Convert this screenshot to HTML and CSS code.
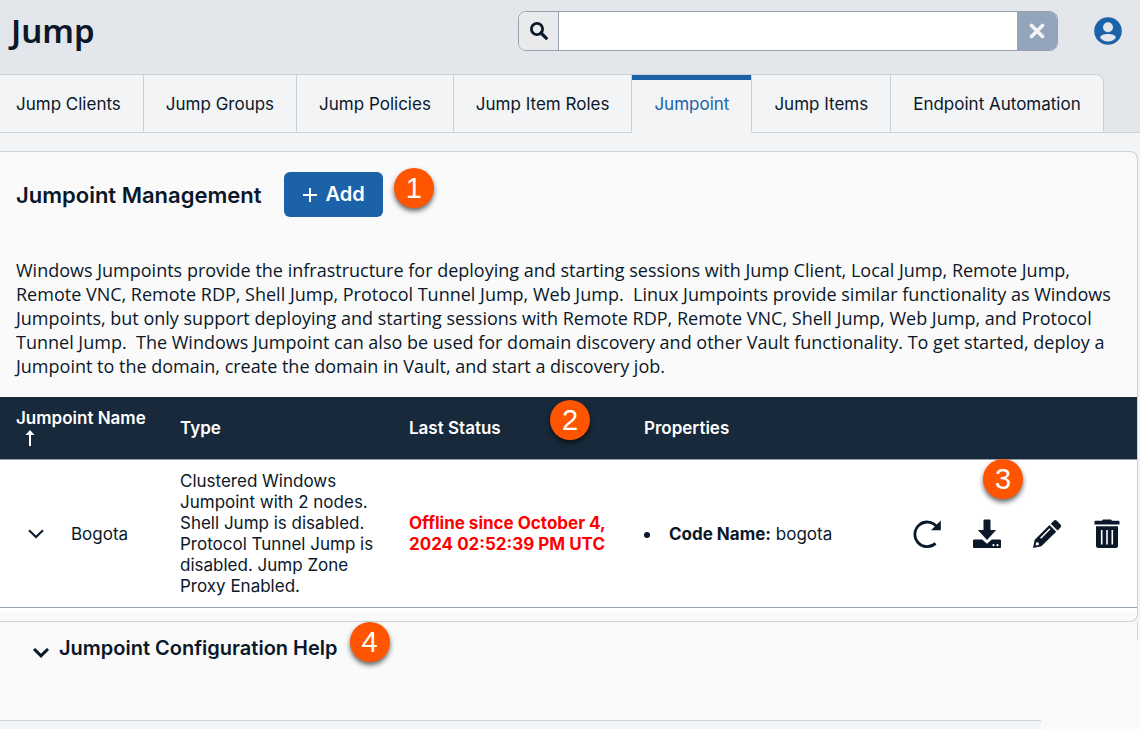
FILE: index.html
```html
<!DOCTYPE html>
<html lang="en">
<head>
  <meta charset="UTF-8" />
  <meta name="viewport" content="width=device-width, initial-scale=1.0" />
  <title>Jump</title>
  <link rel="stylesheet" href="styles.css">
</head>
<body>
  <header class="page-header">
    <h1>Jump</h1>
    <form class="search" role="search">
      <label class="search-label" for="search" aria-label="Search">
        <svg width="18" height="18" viewBox="0 0 18 18" aria-hidden="true">
          <circle cx="7" cy="7" r="5.6" fill="none" stroke="currentColor" stroke-width="2.8"/>
          <path d="M11 11l5.2 5.2" stroke="currentColor" stroke-width="3.2" stroke-linecap="round"/>
        </svg>
      </label>
      <input type="text" id="search">
      <button type="reset" class="search-clear" aria-label="Clear search">
        <svg width="16" height="16" viewBox="0 0 16 16" aria-hidden="true">
          <path d="M2.5 2.5l11 11M13.5 2.5l-11 11" stroke="currentColor" stroke-width="3.6" stroke-linecap="round"/>
        </svg>
      </button>
    </form>
    <button type="button" class="account" aria-label="Account">
      <svg width="28" height="28" viewBox="0 0 28 28" aria-hidden="true">
        <circle cx="14" cy="14" r="13.8" fill="#1c62a8"/>
        <circle cx="14" cy="10.3" r="5" fill="#e3e6eb"/>
        <path d="M6 20.6c1-2.8 4-3.6 8-3.6s7 .8 8 3.6c-1.900 2.500-4.800 4-8 4s-6.100-1.500-8-4z" fill="#e3e6eb"/>
      </svg>
    </button>
  </header>

  <nav class="tabs">
    <a href="#">Jump Clients</a>
    <a href="#">Jump Groups</a>
    <a href="#">Jump Policies</a>
    <a href="#">Jump Item Roles</a>
    <a href="#" class="active">Jumpoint</a>
    <a href="#">Jump Items</a>
    <a href="#">Endpoint Automation</a>
  </nav>

  <main>
    <section class="panel">
      <div class="panel-title">
        <h2>Jumpoint Management</h2>
        <button type="button" class="add">
          <svg width="16" height="16" viewBox="0 0 16 16" aria-hidden="true">
            <path d="M8 1v14M1 8h14" stroke="currentColor" stroke-width="2"/>
          </svg>
          Add
        </button>
        <span class="callout callout-add">1</span>
      </div>

      <p class="intro">Windows Jumpoints provide the infrastructure for deploying and starting sessions with Jump Client, Local Jump, Remote Jump, Remote VNC, Remote RDP, Shell Jump, Protocol Tunnel Jump, Web Jump.&nbsp; Linux Jumpoints provide similar functionality as Windows Jumpoints, but only support deploying and starting sessions with Remote RDP, Remote VNC, Shell Jump, Web Jump, and Protocol Tunnel Jump.&nbsp; The Windows Jumpoint can also be used for domain discovery and other Vault functionality. To get started, deploy a Jumpoint to the domain, create the domain in Vault, and start a discovery job.</p>

      <div class="table-wrapper">
        <table>
          <thead>
            <tr>
              <th class="col-name">Jumpoint Name
                <svg class="sort" width="10" height="16" viewBox="0 0 10 16" aria-hidden="true">
                  <path d="M5 16V3" stroke="currentColor" stroke-width="2"/>
                  <path d="M5 0l4.500 5h-9z" fill="currentColor"/>
                </svg>
              </th>
              <th class="col-type">Type</th>
              <th class="col-status">Last Status <span class="callout callout-table">2</span></th>
              <th>Properties</th>
              <th class="col-actions" aria-label="Actions"></th>
            </tr>
          </thead>
          <tbody>
            <tr>
              <td>
                <div class="name">
                  <button type="button" class="icon-button" aria-label="Expand Bogota">
                    <svg width="16" height="10" viewBox="0 0 16 10" aria-hidden="true">
                      <path d="M1 1.200l7 6.800 7-6.800" fill="none" stroke="currentColor" stroke-width="2"/>
                    </svg>
                  </button>
                  Bogota
                </div>
              </td>
              <td>Clustered Windows Jumpoint with 2 nodes. Shell Jump is disabled. Protocol Tunnel Jump is disabled. Jump Zone Proxy Enabled.</td>
              <td class="offline">Offline since October 4, 2024 02:52:39 PM UTC</td>
              <td>
                <ul>
                  <li><b>Code Name:</b> bogota</li>
                </ul>
              </td>
              <td class="col-actions">
                <div class="actions">
                  <button type="button" class="icon-button" aria-label="Refresh">
                    <svg width="30" height="30" viewBox="0 0 30 30" aria-hidden="true">
                      <path d="M23.500 24.400A12.300 12.300 0 1 1 24.700 7.500" fill="none" stroke="currentColor" stroke-width="2.800"/>
                      <path d="M28.800 1.500V11.200H19z" fill="currentColor"/>
                    </svg>
                  </button>
                  <button type="button" class="icon-button" aria-label="Download">
                    <svg width="30" height="30" viewBox="0 0 30 30" aria-hidden="true">
                      <path d="M11.500 1.500q0-1 1-1h5q1 0 1 1v9.500h5.600L15 21 5.900 11h5.600z" fill="currentColor"/>
                      <path d="M2 20.500h8.200L15 24.800l4.800-4.300H28q1 0 1 1V28q0 1-1 1H2q-1 0-1-1v-6.500q0-1 1-1z" fill="currentColor"/>
                      <circle cx="21.500" cy="26.200" r="1.100" fill="#fff"/>
                      <circle cx="25.500" cy="26.200" r="1.100" fill="#fff"/>
                    </svg>
                  </button>
                  <button type="button" class="icon-button" aria-label="Edit">
                    <svg width="30" height="30" viewBox="0 0 30 30" aria-hidden="true">
                      <path d="M21.800 1.700q1.500-1.500 3 0l3.700 3.700q1.500 1.500 0 3l-3 3-6.700-6.700zM17.500 6l6.700 6.700L9.300 27.300 1 29l1.700-8.300z" fill="currentColor"/>
                      <path d="M8.600 19.200L18 9.800" stroke="#fff" stroke-width="1.500"/>
                      <path d="M4.200 23.200l2.400.3.300 2.400-3.200.7z" fill="#fff"/>
                    </svg>
                  </button>
                  <button type="button" class="icon-button" aria-label="Delete">
                    <svg width="30" height="30" viewBox="0 0 30 30" aria-hidden="true">
                      <path d="M10 1.800l1-1.300h8l1 1.300h6.500q1 0 1 1V5.500h-25V2.800q0-1 1-1z" fill="currentColor"/>
                      <path d="M4 7.300h22V26.500q0 2.500-2.500 2.500h-17Q4 29 4 26.500z" fill="currentColor"/>
                      <path d="M9.700 11v14.500M15 11v14.500M20.300 11v14.500" stroke="#fff" stroke-width="1.600"/>
                    </svg>
                  </button>
                  <span class="callout callout-actions">3</span>
                </div>
              </td>
            </tr>
          </tbody>
        </table>
      </div>
    </section>

    <section class="help">
      <h2>
        <button type="button" class="help-toggle">
          <svg width="16" height="10" viewBox="0 0 16 10" aria-hidden="true">
            <path d="M1 1l7 6.800L15 1" fill="none" stroke="currentColor" stroke-width="3"/>
          </svg>
          Jumpoint Configuration Help
        </button>
      </h2>
      <span class="callout">4</span>
    </section>
    <div class="footer">
      <div class="footer-rule"></div>
    </div>
  </main>
</body>
</html>
```

FILE: styles.css
```css
:root {
  --bg: #f3f4f6;
  --header: #e3e6eb;
  --panel: #fafafa;
  --text: #0a1829;
  --border: #cdd0d5;
  --accent: #1c62a8;
  --table-head: #17293a;
  --line: #97a2b0;
}

* {
  box-sizing: border-box;
}

body {
  margin: 0;
  font-family: Inter, "Liberation Sans", sans-serif;
  font-size: 17px;
  line-height: 21px;
  color: var(--text);
  background: var(--bg);
}

h1, h2, p, ul {
  margin: 0;
}

button, input {
  font: inherit;
  color: inherit;
}

button {
  border: 0;
  padding: 0;
  background: none;
  cursor: pointer;
}

svg {
  display: block;
}

.page-header {
  display: flex;
  align-items: center;
  height: 74px;
  padding: 0 18px 12px 11px;
  background: var(--header);
}

h1 {
  flex: 1;
  font-family: "Noto Sans", sans-serif;
  font-size: 33px;
  font-weight: 600;
  line-height: 46px;
}

.search {
  display: flex;
  width: 540px;
  height: 40px;
  margin-right: 36px;
  border: 1px solid var(--line);
  border-radius: 8px;
  background: #fff;
  overflow: hidden;
}

.search-label {
  display: flex;
  align-items: center;
  justify-content: center;
  width: 40px;
  background: #e9eaeb;
  border-right: 1px solid var(--line);
}

.search input {
  flex: 1;
  min-width: 0;
  border: 0;
  padding: 0 10px;
  outline: none;
}

.search-clear {
  display: flex;
  align-items: center;
  justify-content: center;
  width: 40px;
  color: #f3f4f6;
  background: #93a4bb;
}

.tabs {
  display: flex;
  background: var(--header);
  box-shadow: inset 0 -1px var(--border);
}

.tabs a {
  padding: 19px 22px 17px;
  border: solid var(--border);
  border-width: 1px 1px 1px 0;
  background: var(--bg);
  color: var(--text);
  text-decoration: none;
  white-space: nowrap;
}

.tabs a:first-child {
  padding-left: 16px;
}

.tabs a:last-child {
  border-top-right-radius: 8px;
}

.tabs .active {
  color: var(--accent);
  border-bottom-color: var(--bg);
  box-shadow: inset 0 5px var(--accent);
}

main {
  padding-top: 18px;
}

.panel {
  margin-right: 2px;
  padding-bottom: 9px;
  border: solid var(--border);
  border-width: 1px 1px 1px 0;
  border-radius: 0 8px 8px 0;
  background: var(--panel);
}

.panel-title {
  display: flex;
  align-items: center;
  gap: 22px;
  padding: 20px 16px 41px;
}

h2 {
  font-size: 22px;
  font-weight: 600;
  line-height: 28px;
}

.add {
  display: flex;
  align-items: center;
  gap: 8px;
  height: 45px;
  padding: 0 18px;
  border-radius: 6px;
  background: var(--accent);
  color: #fff;
  font-size: 20px;
  font-weight: 600;
}

.callout {
  width: 40px;
  height: 40px;
  border-radius: 50%;
  background: #ff5500;
  box-shadow: 0 3px 5px rgba(0, 0, 0, 0.6);
  color: #fff;
  font-family: "Liberation Sans", sans-serif;
  font-size: 29px;
  font-weight: 400;
  line-height: 40px;
  text-align: center;
}

.callout-add {
  margin: -14px 0 0 -11px;
}

.intro {
  padding: 0 16px 19px;
  font-family: "Open Sans", "Noto Sans", sans-serif;
  font-size: 18px;
  line-height: 24px;
}

.table-wrapper {
  padding-bottom: 4px;
  background: #fff;
}

table {
  width: 100%;
  border-collapse: collapse;
  table-layout: fixed;
}

th, td {
  padding: 11px 12px 10px 16px;
  text-align: left;
  vertical-align: middle;
  border-bottom: 1px solid var(--line);
}

th {
  position: relative;
  background: var(--table-head);
  color: #fff;
  font-weight: 600;
}

.col-name {
  width: 164px;
  padding-right: 0;
}

.col-type {
  width: 229px;
}

.col-status {
  width: 235px;
}

.col-actions {
  width: 240px;
}

.sort {
  margin: 1px 0 3px 9px;
}

.callout-table {
  position: absolute;
  right: 38px;
  top: 3px;
}

.name {
  display: flex;
  align-items: center;
  gap: 27px;
  padding-left: 12px;
}

.offline {
  color: #ff0000;
  font-weight: 700;
}

ul {
  padding: 0;
  list-style: none;
}

li::before {
  content: "";
  display: inline-block;
  width: 6px;
  height: 6px;
  margin-right: 19px;
  border-radius: 50%;
  background: currentColor;
  vertical-align: middle;
}

b {
  font-weight: 700;
}

.actions {
  position: relative;
  display: flex;
  justify-content: flex-end;
  gap: 30px;
}

td.col-actions {
  padding-right: 15px;
}

.callout-actions {
  position: absolute;
  right: 99px;
  bottom: 50px;
}

.help {
  display: flex;
  align-items: flex-start;
  gap: 12px;
  height: 98px;
  padding-left: 33px;
  background: linear-gradient(var(--border), var(--border)) right 2px top / 1px 18px no-repeat var(--panel);
}

.help h2 {
  padding-top: 12px;
}

.help-toggle {
  display: flex;
  align-items: center;
  gap: 10px;
  font-size: 20px;
}

.help-toggle svg {
  margin-top: 10px;
}

.footer {
  background: var(--panel);
}

.footer-rule {
  width: calc(100% - 99px);
  height: 9px;
  border-top: 1px solid var(--border);
  background: var(--bg);
}
```
